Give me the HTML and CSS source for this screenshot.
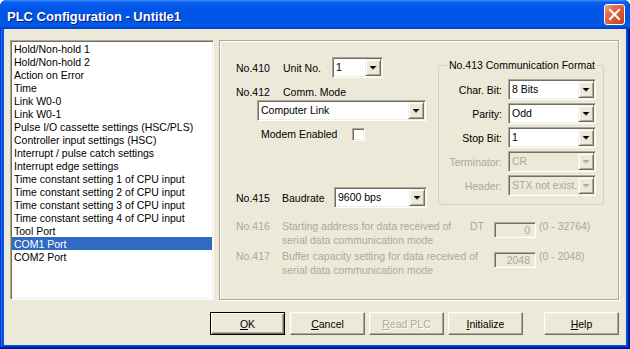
FILE: index.html
```html
<!DOCTYPE html>
<html>
<head>
<meta charset="utf-8">
<title>PLC Configuration - Untitle1</title>
<link rel="stylesheet" href="styles.css">
</head>
<body>
<div class="window">
  <div class="titlebar">
    <span class="title">PLC Configuration - Untitle1</span>
    <span class="close"><svg width="19" height="19" viewBox="0 0 19 19"><path d="M5 5 L14 14 M14 5 L5 14" stroke="#fff" stroke-width="2" stroke-linecap="square"/></svg></span>
  </div>
  <div class="client">
    <div class="main">
      <ul class="list">
        <li>Hold/Non-hold 1</li>
        <li>Hold/Non-hold 2</li>
        <li>Action on Error</li>
        <li>Time</li>
        <li>Link W0-0</li>
        <li>Link W0-1</li>
        <li>Pulse I/O cassette settings (HSC/PLS)</li>
        <li>Controller input settings (HSC)</li>
        <li>Interrupt / pulse catch settings</li>
        <li>Interrupt edge settings</li>
        <li>Time constant setting 1 of CPU input</li>
        <li>Time constant setting 2 of CPU input</li>
        <li>Time constant setting 3 of CPU input</li>
        <li>Time constant setting 4 of CPU input</li>
        <li>Tool Port</li>
        <li class="sel">COM1 Port</li>
        <li>COM2 Port</li>
      </ul>
      <div class="panel">
        <div class="top">
          <div class="leftcol">
            <div class="row">
              <span class="no">No.410</span><span class="lbl lbl-unit">Unit No.</span>
              <div class="combo w-unit"><span class="val">1</span><span class="drop"><i class="arrow"></i></span></div>
            </div>
            <div class="row r412">
              <span class="no">No.412</span><span class="lbl">Comm. Mode</span>
            </div>
            <div class="combo w-comm"><span class="val">Computer Link</span><span class="drop"><i class="arrow"></i></span></div>
            <div class="modem"><span class="modem-lbl">Modem Enabled</span><span class="check"></span></div>
            <div class="row r415">
              <span class="no no-415">No.415</span><span class="lbl lbl-baud">Baudrate</span>
              <div class="combo w-baud"><span class="val">9600 bps</span><span class="drop"><i class="arrow"></i></span></div>
            </div>
          </div>
          <fieldset class="group">
            <legend>No.413 Communication Format</legend>
            <div class="grid">
              <span class="glbl">Char. Bit:</span>
              <div class="combo"><span class="val">8 Bits</span><span class="drop"><i class="arrow"></i></span></div>
              <span class="glbl">Parity:</span>
              <div class="combo"><span class="val">Odd</span><span class="drop"><i class="arrow"></i></span></div>
              <span class="glbl">Stop Bit:</span>
              <div class="combo"><span class="val">1</span><span class="drop"><i class="arrow"></i></span></div>
              <span class="glbl dis">Terminator:</span>
              <div class="combo disabled"><span class="val">CR</span><span class="drop"><i class="arrow"></i></span></div>
              <span class="glbl dis">Header:</span>
              <div class="combo disabled"><span class="val">STX not exist.</span><span class="drop"><i class="arrow"></i></span></div>
            </div>
          </fieldset>
        </div>
        <div class="param p416">
          <span class="no no-415">No.416</span>
          <span class="desc">Starting address for data received of<br>serial data communication mode</span>
          <span class="dt">DT</span>
          <span class="box">0</span>
          <span class="range">(0 - 32764)</span>
        </div>
        <div class="param p417">
          <span class="no no-415">No.417</span>
          <span class="desc">Buffer capacity setting for data received of<br>serial data communication mode</span>
          <span class="dt"></span>
          <span class="box">2048</span>
          <span class="range">(0 - 2048)</span>
        </div>
      </div>
    </div>
    <div class="buttons">
      <span class="btn default"><span><u>O</u>K</span></span>
      <span class="btn"><span><u>C</u>ancel</span></span>
      <span class="btn disabled-btn"><span><u>R</u>ead PLC</span></span>
      <span class="btn"><span><u>I</u>nitialize</span></span>
      <span class="btn b-help"><span><u>H</u>elp</span></span>
    </div>
  </div>
</div>
</body>
</html>
```
FILE: styles.css
```css
* { box-sizing: border-box; }
html, body { margin: 0; padding: 0; background: #ffffff; }
body {
  font-family: "Liberation Sans", Arial, sans-serif;
  font-size: 10.5px;
  color: #000;
}
.window {
  width: 630px;
  height: 349px;
  display: flex;
  flex-direction: column;
  background: #0054e3;
  border-radius: 7px 7px 0 0;
  overflow: hidden;
  box-shadow: inset -1px -1px #00138c, inset 1px 1px #0831d9, inset -2px -2px #001ea0, inset 2px 2px #166aee, inset -3px -3px #003bda, inset 3px 3px #0855dd;
}
.titlebar {
  height: 29px;
  flex: none;
  display: flex;
  align-items: center;
  justify-content: space-between;
  padding: 0 5px 0 7px;
  background: linear-gradient(#3d95ff 0%, #0a5fef 7%, #0055e8 30%, #0054e3 70%, #005be9 88%, #0048d0 95%, #003dc4 100%);
}
.title {
  color: #fff;
  font-weight: bold;
  font-size: 13px;
  text-shadow: 1px 1px #0a1883;
  margin-top: 3px;
}
.close {
  width: 21px;
  height: 21px;
  border: 1px solid #fff;
  border-radius: 3px;
  background: linear-gradient(135deg, #f0a080 0%, #e4704a 30%, #d55228 70%, #c24018 100%);
  display: flex;
  align-items: center;
  justify-content: center;
}
.close svg { display: block; }
.client {
  flex: 1;
  margin: 0 4px 4px;
  background: #ece9d8;
  display: flex;
  flex-direction: column;
  padding: 11px 7px 0 6px;
}
.main { display: flex; gap: 5px; height: 260px; }
.list {
  width: 204px;
  height: 260px;
  margin: 0;
  padding: 1px;
  list-style: none;
  background: #fff;
  border: 1px solid;
  border-color: #aca899 #fff #fff #aca899;
  box-shadow: inset 1px 1px #716f64, inset -1px -1px #f1efe2;
  overflow: hidden;
}
.list li {
  height: 13px;
  line-height: 14px;
  padding-left: 2px;
  white-space: nowrap;
}
.list li.sel { background: #316ac5; color: #fff; }
.panel {
  width: 400px;
  height: 260px;
  border: 1px solid #aca899;
  box-shadow: inset 1px 1px #fff, 1px 1px #fff;
  padding: 16px 0 0 16px;
  display: flex;
  flex-direction: column;
}
.top { display: flex; align-items: flex-start; }
.leftcol { width: 192px; display: flex; flex-direction: column; }
.row { display: flex; align-items: center; height: 21px; }
.no { width: 47px; flex: none; }
.no-415 { width: 46px; }
.lbl-unit { width: 49px; }
.lbl-baud { width: 52px; }
.r412 { height: 14px; margin-top: 7px; }
.combo {
  display: flex;
  height: 21px;
  background: #fff;
  border: 1px solid;
  border-color: #aca899 #fff #fff #aca899;
  box-shadow: inset 1px 1px #716f64, inset -1px -1px #f1efe2;
  padding: 1px;
}
.combo .val {
  flex: 1;
  min-width: 0;
  padding-left: 2px;
  line-height: 17px;
  white-space: nowrap;
  overflow: hidden;
}
.combo .drop {
  width: 16px;
  flex: none;
  background: #ece9d8;
  border: 1px solid;
  border-color: #f1efe2 #716f64 #716f64 #f1efe2;
  box-shadow: inset 1px 1px #fff, inset -1px -1px #aca899;
  display: flex;
  align-items: center;
  justify-content: center;
}
.arrow {
  display: block;
  width: 7px;
  height: 4px;
  background: #000;
  clip-path: polygon(0 0, 7px 0, 7px 1px, 6px 1px, 6px 2px, 5px 2px, 5px 3px, 4px 3px, 4px 4px, 3px 4px, 3px 3px, 2px 3px, 2px 2px, 1px 2px, 1px 1px, 0 1px);
}
.combo.disabled { background: #ece9d8; color: #aca899; }
.combo.disabled .arrow { background: #aca899; }
.w-unit { width: 51px; }
.w-comm { width: 169px; margin: 1px 0 0 21px; }
.w-baud { width: 93px; }
.modem { display: flex; align-items: center; height: 14px; margin: 6px 0 0 25px; }
.modem-lbl { width: 91px; }
.check {
  width: 13px;
  height: 13px;
  background: #fff;
  border: 1px solid;
  border-color: #aca899 #fff #fff #aca899;
  box-shadow: inset 1px 1px #716f64, inset -1px -1px #f1efe2;
}
.r415 { margin-top: 46px; }
.group {
  margin: 2px 0 0 10px;
  width: 166px;
  border: 1px solid #d0d0bf;
  border-radius: 3px;
  padding: 0 7px 8px 0;
  min-width: 0;
}
.group legend {
  margin-left: 8px;
  padding: 0 2px;
  line-height: 13px;
  white-space: nowrap;
}
.grid {
  margin-top: 7px;
  display: grid;
  grid-template-columns: 1fr 88px;
  column-gap: 6px;
  row-gap: 3px;
  align-items: center;
}
.glbl { text-align: right; }
.dis { color: #aca899; }
.param {
  display: flex;
  align-items: flex-start;
  line-height: 14px;
  color: #aca899;
}
.p416 { margin-top: 11px; }
.p417 { margin-top: 2px; }
.desc { width: 188px; flex: none; white-space: nowrap; }
.dt { width: 24px; flex: none; }
.box {
  width: 42px;
  height: 16px;
  margin-top: 3px;
  text-align: right;
  padding-right: 5px;
  line-height: 14px;
  border: 1px solid;
  border-color: #aca899 #fff #fff #aca899;
  box-shadow: inset 1px 1px #716f64, inset -1px -1px #f1efe2;
}
.range { margin-left: 3px; }
.buttons {
  display: flex;
  justify-content: flex-end;
  gap: 4px;
  margin-top: 12px;
}
.btn {
  width: 75px;
  height: 23px;
  display: flex;
  align-items: center;
  justify-content: center;
  background: #ece9d8;
  border: 1px solid;
  border-color: #fff #716f64 #716f64 #fff;
  box-shadow: inset -1px -1px #aca899, inset 1px 1px #f1efe2;
}
.btn.default {
  border: 1px solid #000;
  box-shadow: inset 1px 1px #fff, inset -1px -1px #716f64, inset -2px -2px #aca899;
  margin-right: 1px;
}
.disabled-btn { color: #aca899; text-shadow: 1px 1px #fff; }
.b-help { margin-left: 17px; }
```
